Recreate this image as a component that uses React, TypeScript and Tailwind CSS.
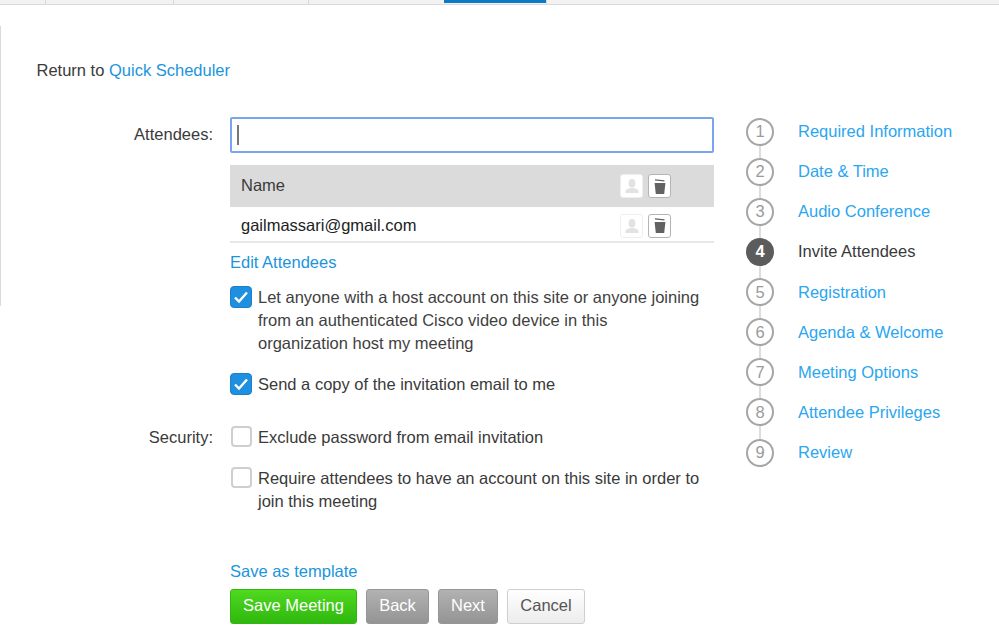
const font = "font-['Liberation_Sans',Arial,sans-serif]";

const steps = [
  "Required Information",
  "Date & Time",
  "Audio Conference",
  "Invite Attendees",
  "Registration",
  "Agenda & Welcome",
  "Meeting Options",
  "Attendee Privileges",
  "Review",
];

function PersonIcon() {
  return (
    <span className="flex h-[24px] w-[23px] items-center justify-center rounded-[3px] border border-[#eeeeee] bg-white">
      <svg width="16" height="16" viewBox="0 0 16 16" fill="#e2e2e2">
        <ellipse cx="8" cy="5.2" rx="3.4" ry="4.2" />
        <path d="M1.5 15v-1.6c0-1.7 3-2.6 4.6-3.4h3.8c1.6.8 4.6 1.7 4.6 3.4V15z" />
      </svg>
    </span>
  );
}

function TrashIcon() {
  return (
    <span className="flex h-[24px] w-[23px] items-center justify-center rounded-[3px] border border-[#b4b4b4] bg-white">
      <svg width="14" height="17" viewBox="0 0 14 17" fill="#626262">
        <path d="M2 1.2 11.5 2.2 11.4 3.4 2 2.4z" />
        <path d="M1.6 5h10.8l-1.2 11H2.8z" />
      </svg>
    </span>
  );
}

function CheckBox({ checked }: { checked?: boolean }) {
  if (checked) {
    return (
      <span className="flex h-[22px] w-[22px] shrink-0 items-center justify-center rounded-[4px] border border-[#1b7fcc] bg-[#1f8fe0]">
        <svg width="16" height="14" viewBox="0 0 16 14" fill="none" stroke="#ffffff" strokeWidth="2.4">
          <path d="M2 7.5 6 11.5 14 2.5" />
        </svg>
      </span>
    );
  }
  return <span className="h-[21px] w-[21px] shrink-0 rounded-[4px] border-2 border-[#cfcfcf] bg-white" />;
}

function TableRow({ name, header }: { name: string; header?: boolean }) {
  return (
    <div
      className={
        header
          ? "flex h-[42px] items-center justify-between bg-[#dbdbdb] pl-[11px] pr-[43px]"
          : "flex h-[36px] items-center justify-between border-b-2 border-[#e8e8e8] pl-[11px] pr-[43px] pt-[3px]"
      }
    >
      <span className={header ? "mb-[2px] text-[#3a3a3a]" : "text-[#222222]"}>{name}</span>
      <span className="flex gap-[5px]">
        <PersonIcon />
        <TrashIcon />
      </span>
    </div>
  );
}

export default function App() {
  return (
    <div className={`${font} h-[630px] w-[999px] overflow-hidden bg-white text-[16.5px] leading-[23px] text-[#3a3a3a]`}>
      {/* Top tabs */}
      <div className="flex h-[5px] border-b border-[#d9d9d9] bg-[#f2f2f2]">
        <div className="w-[46px] border-r border-[#d9d9d9]" />
        <div className="w-[128px] border-r border-[#d9d9d9]" />
        <div className="w-[135px] border-r border-[#d9d9d9]" />
        <div className="w-[135px]" />
        <div className="h-[3px] w-[102px] bg-[#0b79c4]" />
        <div className="w-px bg-[#d9d9d9]" />
      </div>

      <div className="flex">
        <div className="mt-[21px] h-[280px] w-px bg-[#d9d9d9]" />

        <div className="w-[713px]">
          <div className="mt-[54px] pl-[35.5px]">
            Return to <a className="text-[#1b95dc]">Quick Scheduler</a>
          </div>

          {/* Attendees */}
          <div className="mt-[35px] flex">
            <div className="w-[212px] pt-[6px] text-right">Attendees:</div>
            <div className="ml-[17px] w-[484px]">
              <div className="flex h-[36px] items-center rounded-[2px] border-2 border-[#7ba4ee] pl-[5px]">
                <span className="h-[20px] w-[2px] bg-[#777777]" />
              </div>
              <div className="mt-[12px]">
                <TableRow name="Name" header />
                <TableRow name="gailmassari@gmail.com" />
              </div>
              <a className="mt-[8px] block text-[#1b95dc]">Edit Attendees</a>
              <div className="mt-[12px] flex gap-[6px] pr-[13px]">
                <CheckBox checked />
                <p className="text-[#3f3f3f]">
                  Let anyone with a host account on this site or anyone joining from an authenticated Cisco video device
                  in this organization host my meeting
                </p>
              </div>
              <div className="mt-[18px] flex gap-[6px]">
                <CheckBox checked />
                <p>Send a copy of the invitation email to me</p>
              </div>
            </div>
          </div>

          {/* Security */}
          <div className="mt-[30px] flex">
            <div className="w-[212px] text-right">Security:</div>
            <div className="ml-[17px] w-[484px]">
              <div className="flex gap-[6px] pl-[1px]">
                <CheckBox />
                <p>Exclude password from email invitation</p>
              </div>
              <div className="mt-[18px] flex gap-[6px] pl-[1px] pr-[13px]">
                <CheckBox />
                <p>Require attendees to have an account on this site in order to join this meeting</p>
              </div>
            </div>
          </div>

          {/* Footer actions */}
          <div className="ml-[229px] mt-[47px]">
            <a className="block text-[#1b95dc]">Save as template</a>
            <div className="mt-[6px] flex">
              <button className="h-[35px] w-[127px] rounded-[3px] border border-[#35b512] bg-linear-to-b from-[#4fd91f] to-[#2fb80e] pb-[2px] text-white">
                Save Meeting
              </button>
              <button className="ml-[9px] h-[35px] w-[63px] rounded-[3px] border border-[#969696] bg-linear-to-b from-[#b2b2b2] to-[#949494] pb-[2px] text-white">
                Back
              </button>
              <button className="ml-[9px] h-[35px] w-[60px] rounded-[3px] border border-[#969696] bg-linear-to-b from-[#b2b2b2] to-[#949494] pb-[2px] text-white">
                Next
              </button>
              <button className="ml-[9px] h-[35px] w-[78px] rounded-[3px] border border-[#cfcfcf] bg-linear-to-b from-[#ffffff] to-[#ececec] pb-[2px] text-[#555555]">
                Cancel
              </button>
            </div>
          </div>
        </div>

        {/* Steps */}
        <div className="ml-[32px] mt-[112.6px]">
          {steps.map((s, i) => {
            const active = i === 3;
            return (
              <div key={s}>
                <div className="flex h-[28px] items-center">
                  <span
                    className={
                      active
                        ? "flex h-[28px] w-[28px] items-center justify-center rounded-full bg-[#5c5c5c] font-bold text-white"
                        : "flex h-[28px] w-[28px] items-center justify-center rounded-full border-2 border-[#a6a6a6] text-[#9a9a9a]"
                    }
                  >
                    {i + 1}
                  </span>
                  <span className={active ? "ml-[24px] text-[#3a3a3a]" : "ml-[24px] text-[#2ba6f0]"}>{s}</span>
                </div>
                {i < steps.length - 1 && <div className="ml-[13px] h-[12.125px] w-[2px] bg-[#dddddd]" />}
              </div>
            );
          })}
        </div>
      </div>
    </div>
  );
}
